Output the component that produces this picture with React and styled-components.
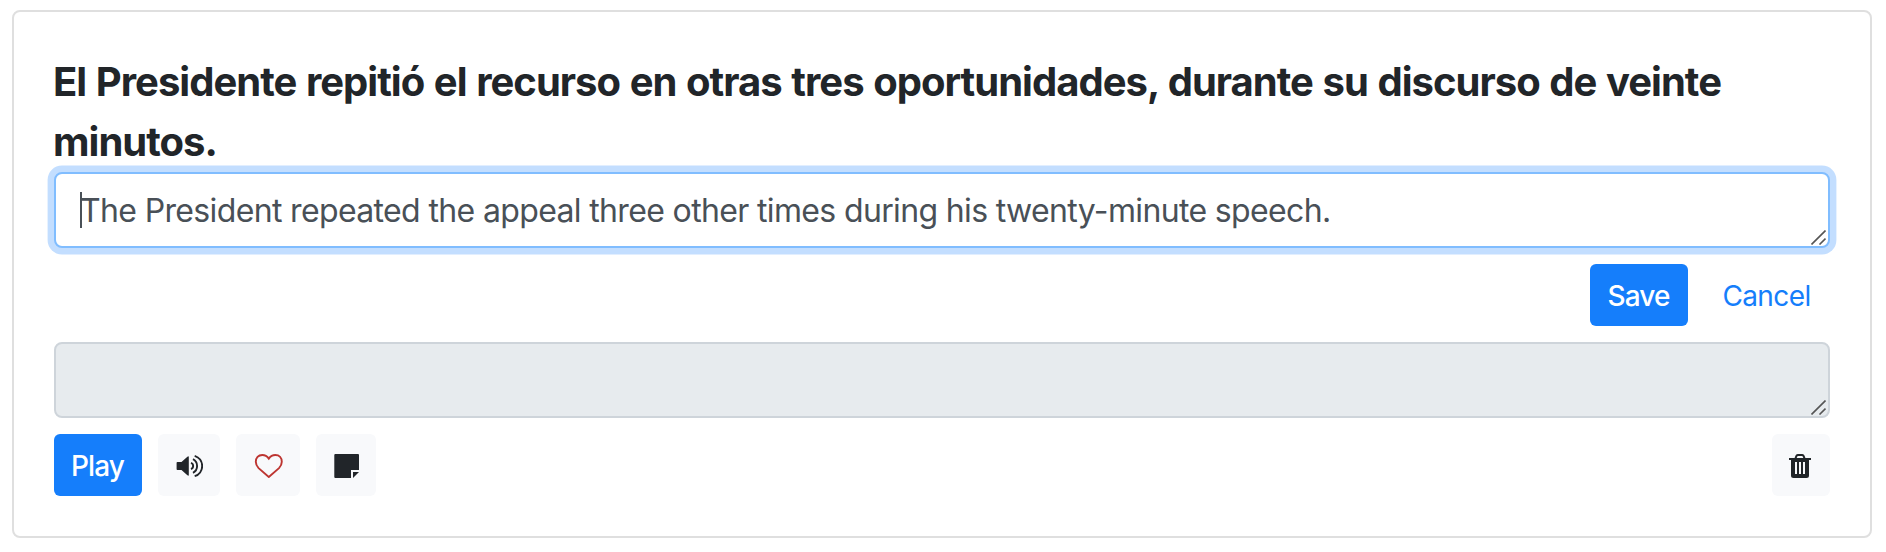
import React from "react";
import styled, { createGlobalStyle } from "styled-components";

const GlobalStyle = createGlobalStyle`
  * { box-sizing: border-box; }
  body {
    margin: 0;
    background: #fff;
    color: #212529;
    font-family: Inter, "Liberation Sans", sans-serif;
  }
`;

const Page = styled.main`
  height: 552px;
  padding: 10px 14px 14px 12px;
`;

const Card = styled.article`
  height: 528px;
  padding: 40px;
  border: 2px solid #dfdfdf;
  border-radius: 8px;
`;

const Sentence = styled.h1`
  margin: 0 0 0 -1px;
  font-size: 40px;
  line-height: 60px;
  font-weight: 700;
  letter-spacing: -0.98px;
  word-spacing: 1.1px;
  white-space: nowrap;
`;

const Field = styled.div`
  position: relative;
  display: flex;
  height: 76px;
  padding: 13px 24px 11px;
  border: 2px solid ${(p) => (p.$disabled ? "#ced4da" : "#80bdff")};
  border-radius: 8px;
  background: ${(p) => (p.$disabled ? "#e7ebee" : "#fff")};
  box-shadow: ${(p) => (p.$disabled ? "none" : "0 0 0 6.4px #c3deff")};
  color: #495057;
  font-size: 32px;
  line-height: 48px;
  letter-spacing: -0.643px;
  white-space: nowrap;
`;

const Caret = styled.span`
  width: 2px;
  height: 36px;
  margin: 5px -2px 0 0;
  background: #495057;
`;

const Grip = styled.svg`
  position: absolute;
  right: 2px;
  bottom: 1px;
`;

const Actions = styled.div`
  display: flex;
  justify-content: flex-end;
  gap: 16px;
  margin: 16px 0;
`;

const Toolbar = styled.div`
  display: flex;
  gap: 16px;
  margin-top: 16px;
`;

const Button = styled.button`
  height: 62px;
  width: ${(p) => p.$width}px;
  padding: 2px 1px 0 0;
  border: 0;
  border-radius: 6px;
  background: ${(p) => (p.$link ? "transparent" : "#157efb")};
  color: ${(p) => (p.$link ? "#157efb" : "#fff")};
  font: ${(p) => (p.$link ? 400 : 500)} 28px/42px Inter, "Liberation Sans", sans-serif;
  letter-spacing: ${(p) => (p.$link ? -0.6 : -0.9)}px;
  white-space: nowrap;
`;

const IconButton = styled.button`
  display: flex;
  height: 62px;
  padding: 20px 17px 18px;
  border: 0;
  border-radius: 6px;
  background: #f8f9fb;
  color: #212529;
  margin-left: ${(p) => (p.$end ? "auto" : 0)};
`;

function ResizeGrip() {
  return (
    <Grip width="15" height="15" viewBox="0 0 15 15" fill="none" stroke="#555" strokeWidth="1.6">
      <path d="M0.5 14.5 14.5 0.5M8.5 14.5 14.5 8.5" />
    </Grip>
  );
}

const SoundIcon = () => (
  <svg width="28" height="24" viewBox="0 0 28 24" fill="none">
    <path d="M2.4 8H6.5L12.4 2.7Q13.8 1.8 13.8 3V21Q13.8 22.2 12.4 21.3L6.5 16H2.4Q1.6 16 1.6 15.2V8.8Q1.6 8 2.4 8Z" fill="currentColor" />
    <path d="M16 8.9A3.3 3.3 0 0 1 16 15.1M18 5.2A7.7 7.7 0 0 1 18 18.8M19.7 1.8A10.7 10.7 0 0 1 19.7 22.2" stroke="currentColor" strokeWidth="1.9" />
  </svg>
);

const HeartIcon = () => (
  <svg width="30" height="24" viewBox="0 0 30 24" fill="none" stroke="#bd3531" strokeWidth="1.9">
    <path d="M15.8 4.6C14 2 11.8 1 9.3 1C5.3 1 2.8 3.8 2.8 7.8C2.8 10.4 3.9 12.3 5.6 14.1L15.8 23L26 14.1C27.7 12.3 28.8 10.4 28.8 7.8C28.8 3.8 26.3 1 22.3 1C19.8 1 17.6 2 15.8 4.6Z" />
  </svg>
);

const NoteIcon = () => (
  <svg width="26" height="24" viewBox="0 0 26 24" fill="currentColor">
    <path d="M2.3 0H25Q26 0 26 1V16H18V24H2.3Q1.3 24 1.3 23V1Q1.3 0 2.3 0Z" />
    <path d="M20 18H26L20 24Z" />
  </svg>
);

const TrashIcon = () => (
  <svg width="24" height="24" viewBox="0 0 24 24" fill="currentColor">
    <path fillRule="evenodd" d="M0 4H5.6L6.4 1.7Q7 0 8.7 0H13.3Q15 0 15.6 1.7L16.4 4H22V6H20V21.5Q20 24 17.5 24H4.5Q2 24 2 21.5V6H0ZM7.7 4H14.3L13.8 2.6Q13.5 2 12.8 2H9.2Q8.5 2 8.2 2.6ZM6 8V20H8V8ZM10 8V20H12V8ZM14 8V20H16V8Z" />
  </svg>
);

export default function App() {
  return (
    <Page>
      <GlobalStyle />
      <Card>
        <Sentence>
          El Presidente repitió el recurso en otras tres oportunidades, durante su discurso de veinte
          <br />
          minutos.
        </Sentence>
        <Field>
          <Caret />
          <span>The President repeated the appeal three other times during his twenty-minute speech.</span>
          <ResizeGrip />
        </Field>
        <Actions>
          <Button $width={98}>Save</Button>
          <Button $link $width={126}>Cancel</Button>
        </Actions>
        <Field $disabled>
          <ResizeGrip />
        </Field>
        <Toolbar>
          <Button $width={88}>Play</Button>
          <IconButton aria-label="Listen"><SoundIcon /></IconButton>
          <IconButton aria-label="Favorite"><HeartIcon /></IconButton>
          <IconButton aria-label="Note"><NoteIcon /></IconButton>
          <IconButton $end aria-label="Delete"><TrashIcon /></IconButton>
        </Toolbar>
      </Card>
    </Page>
  );
}
